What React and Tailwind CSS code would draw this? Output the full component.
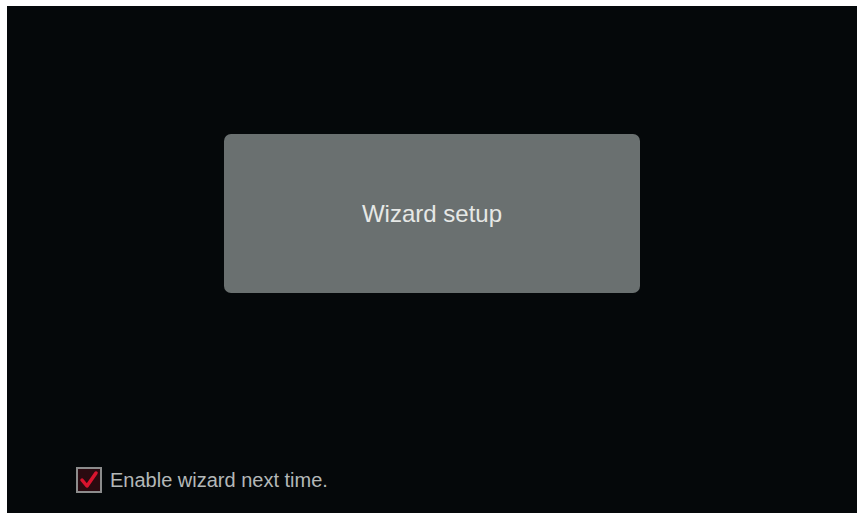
export default function App() {
  return (
    <div className="h-[517px] w-[857px] bg-white pl-[7px] pt-[6px] pb-[4px]">
      <div
        className="flex h-full w-full flex-col bg-[#05080a]"
        style={{ fontFamily: '"Liberation Sans", Arial, sans-serif' }}
      >
        <div className="flex flex-1 items-start justify-center pt-[128px]">
          <div className="flex h-[159px] w-[416px] items-center justify-center rounded-[7px] bg-[#6a7070]">
            <span className="text-[24px] leading-none text-[#e6e8e6]">Wizard setup</span>
          </div>
        </div>
        <div className="flex items-center gap-[8px] pb-[20px] pl-[69px]">
          <div className="flex h-[26px] w-[26px] items-center justify-center border-2 border-[#8c8c8c] bg-[#2a0a10]">
            <svg viewBox="0 0 20 20" className="h-[20px] w-[20px]">
              <path
                d="M3 10 L8 16 L17 3"
                fill="none"
                stroke="#d8142e"
                strokeWidth="3.5"
                strokeLinecap="round"
                strokeLinejoin="round"
              />
            </svg>
          </div>
          <span className="text-[20px] leading-none text-[#b4b8b8]">Enable wizard next time.</span>
        </div>
      </div>
    </div>
  );
}
